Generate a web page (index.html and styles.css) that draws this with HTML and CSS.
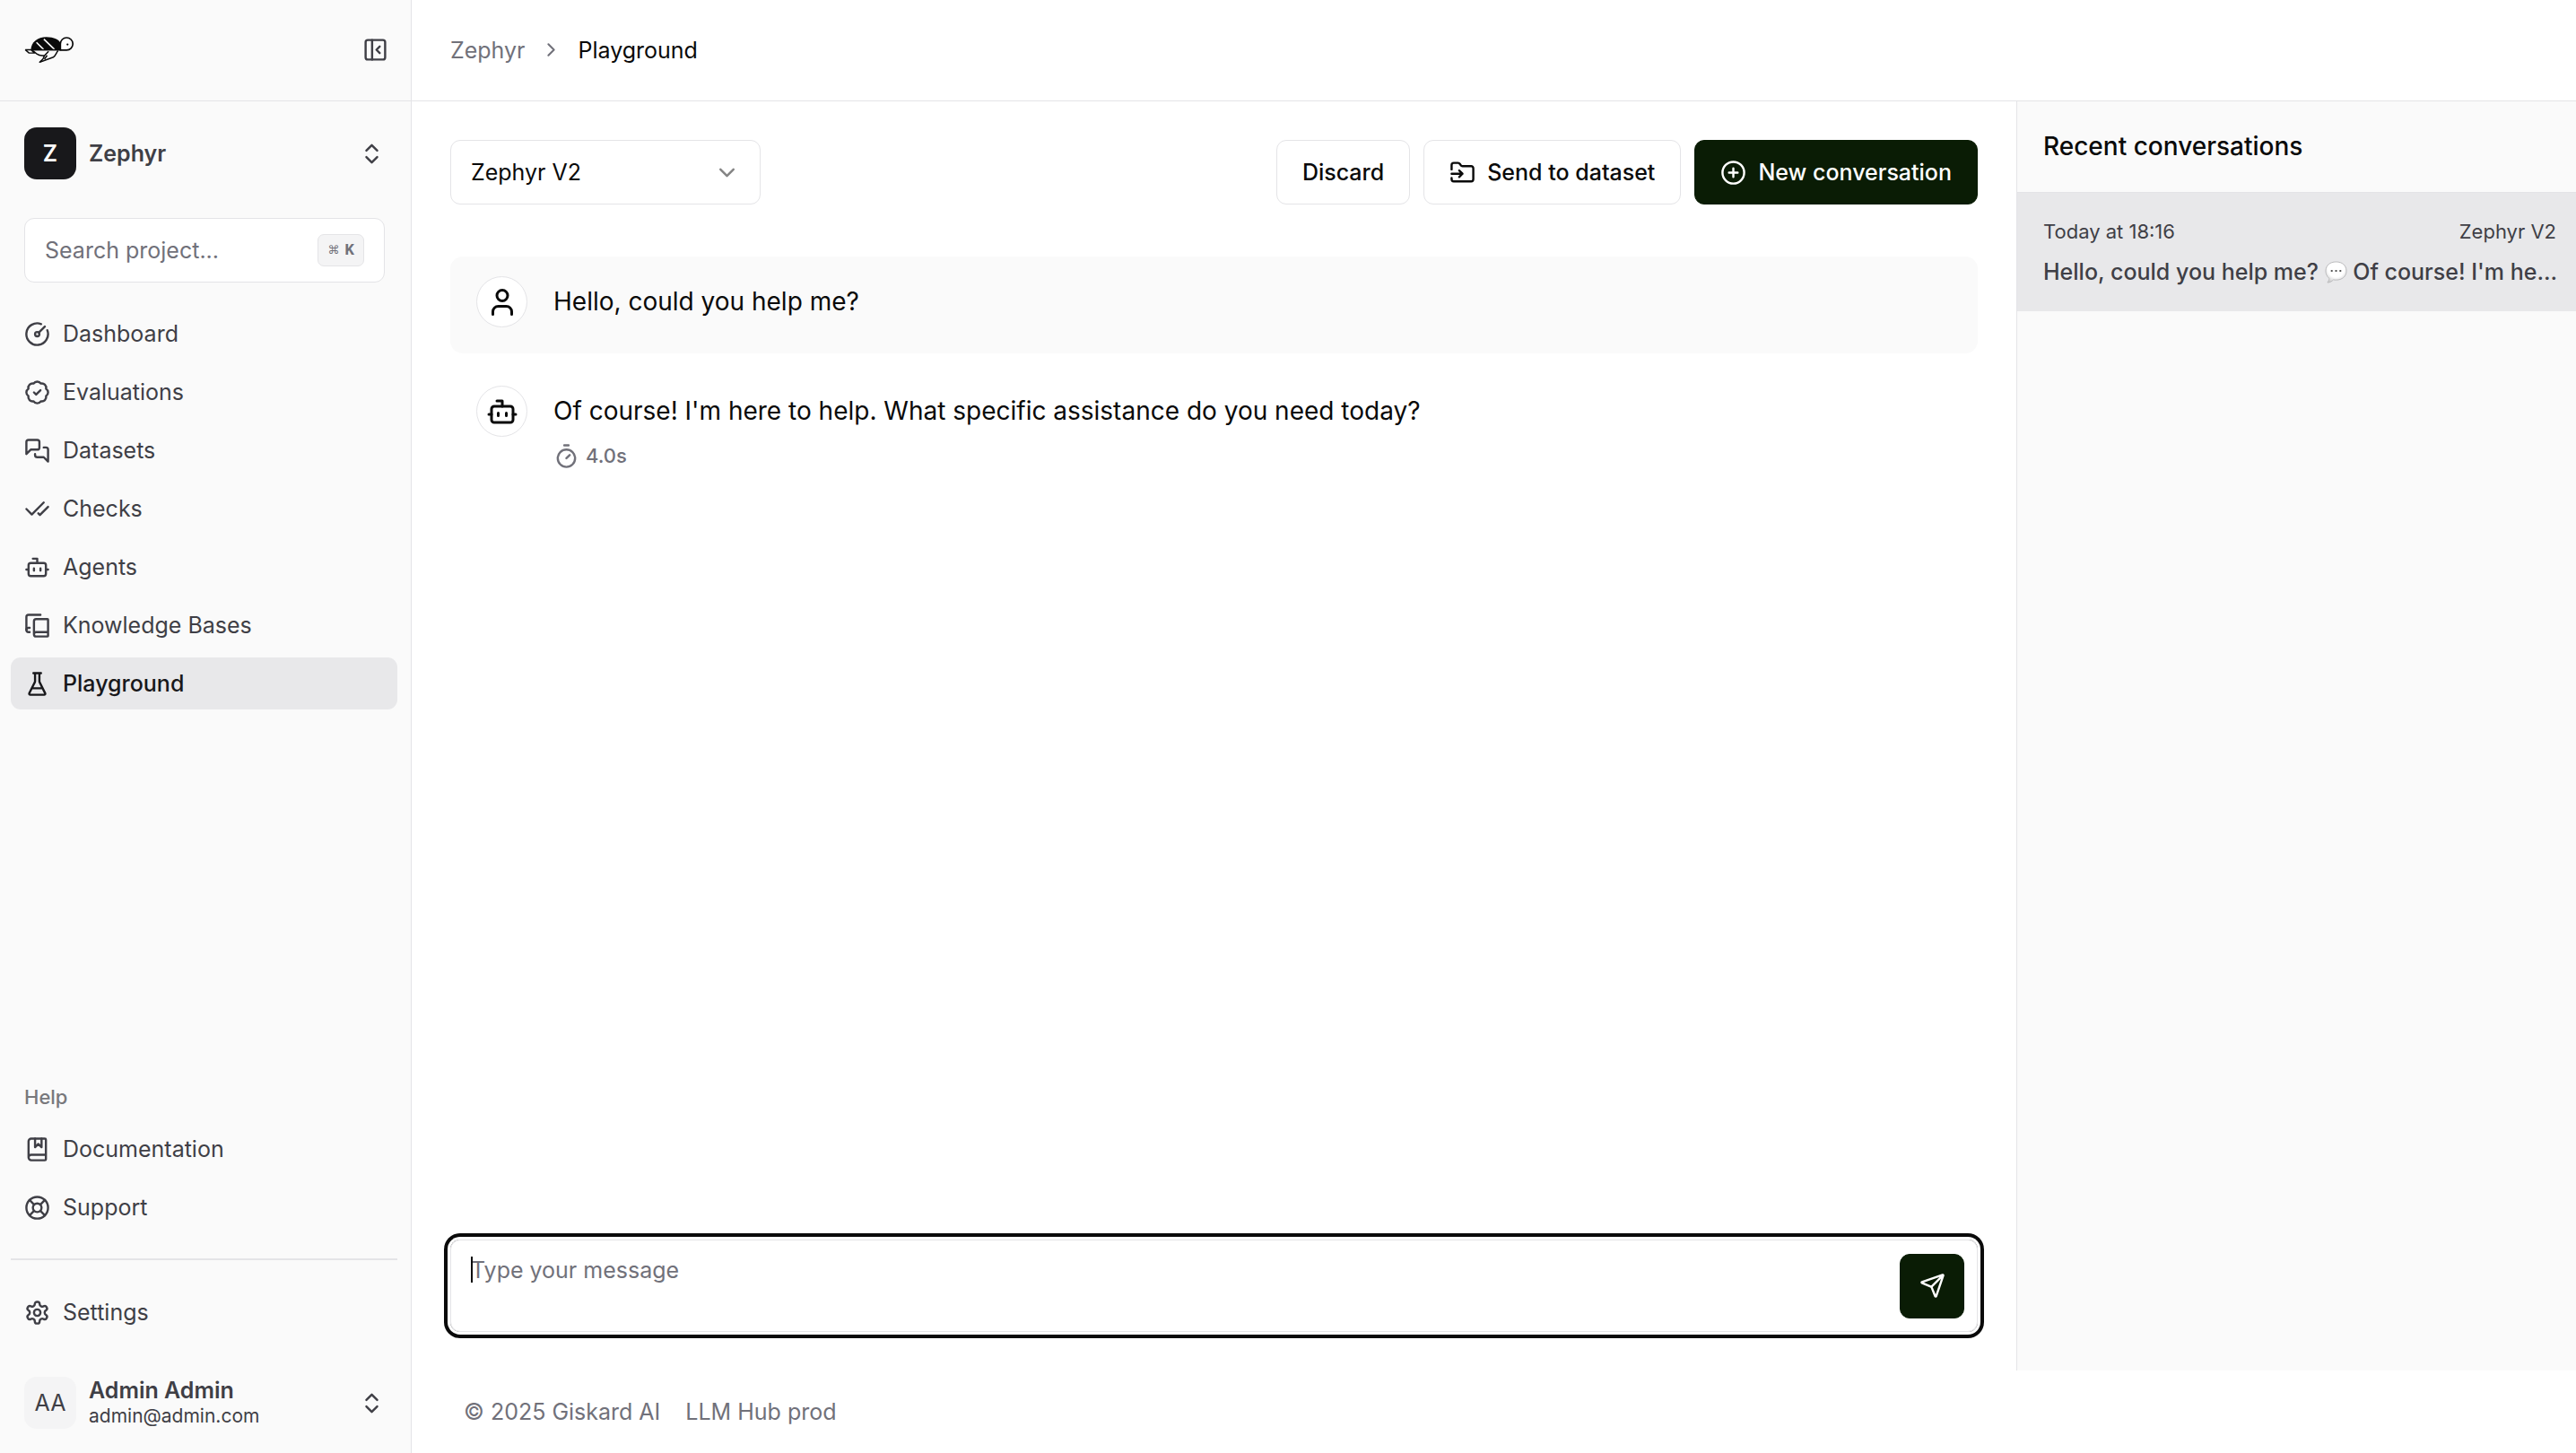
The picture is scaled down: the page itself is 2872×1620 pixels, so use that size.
FILE: index.html
```html
<!DOCTYPE html>
<html lang="en">
<head>
<meta charset="utf-8">
<meta name="viewport" content="width=device-width, initial-scale=1">
<title>Playground - Zephyr</title>
<link rel="stylesheet" href="styles.css">
</head>
<body>
<svg class="sprite" aria-hidden="true">
  <symbol id="panel-close" viewBox="0 0 24 24"><rect x="3" y="3" width="18" height="18" rx="2"/><path d="M9 3v18M16 15l-3-3 3-3"/></symbol>
  <symbol id="chevrons" viewBox="0 0 24 24"><path d="m7 15 5 5 5-5M7 9l5-5 5 5"/></symbol>
  <symbol id="chevron-right" viewBox="0 0 24 24"><path d="m9 18 6-6-6-6"/></symbol>
  <symbol id="chevron-down" viewBox="0 0 24 24"><path d="m6 9 6 6 6-6"/></symbol>
  <symbol id="gauge" viewBox="0 0 24 24"><path d="M15.6 2.7a10 10 0 1 0 5.7 5.7M13.4 10.6 19 5"/><circle cx="12" cy="12" r="2"/></symbol>
  <symbol id="badge-check" viewBox="0 0 24 24"><path d="M3.85 8.62a4 4 0 0 1 4.78-4.77 4 4 0 0 1 6.74 0 4 4 0 0 1 4.78 4.78 4 4 0 0 1 0 6.74 4 4 0 0 1-4.77 4.78 4 4 0 0 1-6.75 0 4 4 0 0 1-4.78-4.77 4 4 0 0 1 0-6.76Z"/><path d="m9 12 2 2 4-4"/></symbol>
  <symbol id="messages" viewBox="0 0 24 24"><path d="M14 9a2 2 0 0 1-2 2H6l-4 4V4a2 2 0 0 1 2-2h8a2 2 0 0 1 2 2z"/><path d="M18 9h2a2 2 0 0 1 2 2v11l-4-4h-6a2 2 0 0 1-2-2v-1"/></symbol>
  <symbol id="check-check" viewBox="0 0 24 24"><path d="M18 6 7 17l-5-5M22 10l-7.500 7.500L13 16"/></symbol>
  <symbol id="bot" viewBox="0 0 24 24"><path d="M12 8V4H8"/><rect x="4" y="8" width="16" height="12" rx="2"/><path d="M2 14h2M20 14h2M15 13v2M9 13v2"/></symbol>
  <symbol id="book-copy" viewBox="0 0 24 24"><path d="M2 16V4a2 2 0 0 1 2-2h11"/><path d="M22 18H11a2 2 0 1 0 0 4h10.5a.5.5 0 0 0 .5-.5v-15a.5.5 0 0 0-.5-.5H11a2 2 0 0 0-2 2v12"/><path d="M5 14H4a2 2 0 1 0 0 4h1"/></symbol>
  <symbol id="flask" viewBox="0 0 24 24"><path d="M10 2v7.527a2 2 0 0 1-.211.896L4.720 20.550a1 1 0 0 0 .9 1.450h12.760a1 1 0 0 0 .9-1.450l-5.069-10.127A2 2 0 0 1 14 9.527V2M8.500 2h7M7 16h10"/></symbol>
  <symbol id="book-marked" viewBox="0 0 24 24"><path d="M10 2v8l3-3 3 3V2"/><path d="M4 19.500v-15A2.500 2.500 0 0 1 6.500 2H19a1 1 0 0 1 1 1v18a1 1 0 0 1-1 1H6.500a1 1 0 0 1 0-5H20"/></symbol>
  <symbol id="life-buoy" viewBox="0 0 24 24"><circle cx="12" cy="12" r="10"/><circle cx="12" cy="12" r="4"/><path d="m4.930 4.930 4.240 4.240M14.830 9.170l4.240-4.240M14.830 14.830l4.240 4.240M9.170 14.830l-4.240 4.240"/></symbol>
  <symbol id="settings" viewBox="0 0 24 24"><path d="M12.220 2h-.44a2 2 0 0 0-2 2v.18a2 2 0 0 1-1 1.730l-.43.25a2 2 0 0 1-2 0l-.15-.08a2 2 0 0 0-2.730.73l-.22.38a2 2 0 0 0 .73 2.730l.15.1a2 2 0 0 1 1 1.720v.51a2 2 0 0 1-1 1.740l-.15.09a2 2 0 0 0-.73 2.730l.22.38a2 2 0 0 0 2.730.73l.15-.08a2 2 0 0 1 2 0l.43.25a2 2 0 0 1 1 1.730V20a2 2 0 0 0 2 2h.44a2 2 0 0 0 2-2v-.18a2 2 0 0 1 1-1.730l.43-.25a2 2 0 0 1 2 0l.15.08a2 2 0 0 0 2.730-.73l.22-.39a2 2 0 0 0-.73-2.730l-.15-.08a2 2 0 0 1-1-1.740v-.5a2 2 0 0 1 1-1.740l.15-.09a2 2 0 0 0 .73-2.730l-.22-.38a2 2 0 0 0-2.730-.73l-.15.08a2 2 0 0 1-2 0l-.43-.25a2 2 0 0 1-1-1.730V4a2 2 0 0 0-2-2z"/><circle cx="12" cy="12" r="3"/></symbol>
  <symbol id="folder-input" viewBox="0 0 24 24"><path d="M2 9V5a2 2 0 0 1 2-2h3.900a2 2 0 0 1 1.690.9l.81 1.200a2 2 0 0 0 1.670.9H20a2 2 0 0 1 2 2v10a2 2 0 0 1-2 2H4a2 2 0 0 1-2-2v-1"/><path d="M2 13h10M9 16l3-3-3-3"/></symbol>
  <symbol id="circle-plus" viewBox="0 0 24 24"><circle cx="12" cy="12" r="10"/><path d="M8 12h8M12 8v8"/></symbol>
  <symbol id="user" viewBox="0 0 24 24"><path d="M19 21v-2a4 4 0 0 0-4-4H9a4 4 0 0 0-4 4v2"/><circle cx="12" cy="7" r="4"/></symbol>
  <symbol id="timer" viewBox="0 0 24 24"><path d="M10 2h4M12 14l3-3"/><circle cx="12" cy="14" r="8"/></symbol>
  <symbol id="send" viewBox="0 0 24 24"><path d="M14.536 21.686a.5.5 0 0 0 .937-.024l6.500-19a.496.496 0 0 0-.635-.635l-19 6.500a.5.5 0 0 0-.024.937l7.930 3.180a2 2 0 0 1 1.112 1.110zM21.854 2.147l-10.940 10.939"/></symbol>
</svg>

<div class="app">
  <aside class="sidebar">
    <div class="sidebar-top">
      <a class="logo" href="#" aria-label="Home">
        <svg viewBox="0 0 166 88" width="55" height="29" aria-hidden="true">
          <path d="M22 46C22 18 46 1 74 1c26 0 44 9 49 22v23z" fill="#0a0a0a"/>
          <path d="M41 19l24 24M66 8l36 35" stroke="#fafafa" stroke-width="5" fill="none"/>
          <path d="M122 45V24a21 21 0 1 1 21 21z" fill="#fff" stroke="#0a0a0a" stroke-width="5"/>
          <circle cx="146" cy="26" r="3.500" fill="#0a0a0a"/>
          <path d="M3 44h122M3 44l13 11h19L24 45M30 48l11 9c8 6 18 8 28 6M82 49L68 64l-5 11-11 11 46-17c8-4 9-14 16-22M68 76l9-13" stroke="#0a0a0a" stroke-width="4.500" fill="none" stroke-linejoin="round"/>
        </svg>
      </a>
      <button class="plain" type="button" aria-label="Collapse sidebar"><svg class="icon"><use href="#panel-close"/></svg></button>
    </div>
    <div class="sidebar-body">
      <button class="switcher" type="button">
        <span class="tile tile-dark">Z</span>
        <span class="switcher-text"><strong>Zephyr</strong></span>
        <svg class="icon"><use href="#chevrons"/></svg>
      </button>
      <label class="search">
        <input type="search" placeholder="Search project..." aria-label="Search project">
        <kbd><span class="cmd">⌘</span><span>K</span></kbd>
      </label>
      <nav class="nav" aria-label="Project">
        <a href="#"><svg class="icon"><use href="#gauge"/></svg>Dashboard</a>
        <a href="#"><svg class="icon"><use href="#badge-check"/></svg>Evaluations</a>
        <a href="#"><svg class="icon"><use href="#messages"/></svg>Datasets</a>
        <a href="#"><svg class="icon"><use href="#check-check"/></svg>Checks</a>
        <a href="#"><svg class="icon"><use href="#bot"/></svg>Agents</a>
        <a href="#"><svg class="icon"><use href="#book-copy"/></svg>Knowledge Bases</a>
        <a class="active" href="#" aria-current="page"><svg class="icon"><use href="#flask"/></svg>Playground</a>
      </nav>
      <div class="help">
        <h2>Help</h2>
        <nav class="nav" aria-label="Help">
          <a href="#"><svg class="icon"><use href="#book-marked"/></svg>Documentation</a>
          <a href="#"><svg class="icon"><use href="#life-buoy"/></svg>Support</a>
        </nav>
      </div>
      <hr>
      <nav class="nav nav-settings" aria-label="Account">
        <a href="#"><svg class="icon"><use href="#settings"/></svg>Settings</a>
      </nav>
      <button class="switcher" type="button">
        <span class="tile">AA</span>
        <span class="switcher-text"><strong>Admin Admin</strong><small>admin@admin.com</small></span>
        <svg class="icon"><use href="#chevrons"/></svg>
      </button>
    </div>
  </aside>

  <div class="page">
    <header class="topbar">
      <a href="#">Zephyr</a>
      <svg class="icon icon-sm"><use href="#chevron-right"/></svg>
      <span aria-current="page">Playground</span>
    </header>
    <div class="workspace">
      <main class="chat">
        <div class="toolbar">
          <div class="select">
            <select aria-label="Agent"><option>Zephyr V2</option></select>
            <svg class="icon"><use href="#chevron-down"/></svg>
          </div>
          <div class="actions">
            <button class="btn" type="button">Discard</button>
            <button class="btn" type="button"><svg class="icon"><use href="#folder-input"/></svg>Send to dataset</button>
            <button class="btn btn-primary" type="button"><svg class="icon"><use href="#circle-plus"/></svg>New conversation</button>
          </div>
        </div>
        <div class="messages">
          <article class="message message-user">
            <span class="avatar"><svg class="icon icon-lg"><use href="#user"/></svg></span>
            <p>Hello, could you help me?</p>
          </article>
          <article class="message">
            <span class="avatar"><svg class="icon icon-lg"><use href="#bot"/></svg></span>
            <div>
              <p>Of course! I'm here to help. What specific assistance do you need today?</p>
              <div class="meta"><svg class="icon"><use href="#timer"/></svg>4.0s</div>
            </div>
          </article>
        </div>
        <form class="composer">
          <span class="caret"></span>
          <textarea rows="2" placeholder="Type your message" aria-label="Message"></textarea>
          <button class="btn btn-primary btn-square" type="button" aria-label="Send"><svg class="icon"><use href="#send"/></svg></button>
        </form>
      </main>
      <aside class="recent">
        <h2>Recent conversations</h2>
        <a class="conversation" href="#">
          <span class="conversation-head"><span>Today at 18:16</span><span>Zephyr V2</span></span>
          <span class="conversation-text">Hello, could you help me? <svg class="bubble" viewBox="0 0 26 26" role="img" aria-label="replied"><defs><radialGradient id="shine" cx=".5" cy=".35" r=".65"><stop offset=".6" stop-color="#fff"/><stop offset="1" stop-color="#cfcfd0"/></radialGradient></defs><path d="M13 1c7 0 12 4 12 10.500S20 22 13 22c-1 0-2 0-3-.3C8 24 5 25 3 25c1-1 2-3 2-5C2.500 18 1 15 1 11.500 1 5 6 1 13 1z" fill="url(#shine)" stroke="#b9b9bb"/><path d="M7 11.500h2M12 11.500h2M17 11.500h2" stroke="#555" stroke-width="2"/></svg> Of course! I'm he...</span>
        </a>
      </aside>
    </div>
    <footer class="footer"><span>© 2025 Giskard AI</span><span>LLM Hub prod</span></footer>
  </div>
</div>
</body>
</html>
```

FILE: styles.css
```css
:root {
  --ink: #0a0a0a;
  --text: #3f3f46;
  --muted: #71717a;
  --line: #e4e4e7;
  --surface: #fafafa;
  --selected: #e8e8ea;
  --primary: #0a1c05;
  --radius: 11px;
}

* { box-sizing: border-box; }

body {
  margin: 0;
  background: #fff;
  color: var(--ink);
  font: 400 25px/36px Inter, "Liberation Sans", sans-serif;
}

button, input, select, textarea { font: inherit; color: inherit; }
a { color: inherit; text-decoration: none; }
h2, p { margin: 0; }

.sprite { display: none; }

.icon {
  flex: none;
  width: 29px;
  height: 29px;
  fill: none;
  stroke: currentColor;
  stroke-width: 2;
  stroke-linecap: round;
  stroke-linejoin: round;
}
.icon-sm { width: 25px; height: 25px; }
.icon-lg { width: 36px; height: 36px; }

.app { display: flex; min-height: 100vh; }

/* Sidebar */
.sidebar {
  display: flex;
  flex-direction: column;
  flex: none;
  width: 459px;
  border-right: 1px solid var(--line);
  background: var(--surface);
  color: var(--text);
}
.sidebar-top {
  display: flex;
  align-items: center;
  justify-content: space-between;
  height: 113px;
  padding: 0 25px 2px 27px;
  border-bottom: 1px solid var(--line);
}
.logo { display: flex; }
.plain { display: flex; padding: 0; border: 0; background: none; }

.sidebar-body {
  display: flex;
  flex: 1;
  flex-direction: column;
  padding: 29px 15px 27px 12px;
}
.switcher {
  display: flex;
  align-items: center;
  gap: 14px;
  padding: 0 14px 0 15px;
  border: 0;
  background: none;
  text-align: left;
}
.switcher-text { display: flex; flex: 1; flex-direction: column; }
.switcher strong { font-weight: 600; line-height: 30px; }
.switcher small { font-size: 21px; line-height: 28px; }
.tile {
  display: grid;
  place-items: center;
  width: 58px;
  height: 58px;
  border-radius: 14px;
  background: #f4f4f5;
}
.tile-dark { background: #18181b; color: #fff; font-weight: 600; }

.search {
  display: flex;
  align-items: center;
  height: 72px;
  margin: 43px 14px 28px 15px;
  padding: 0 22px;
  border: 1px solid var(--line);
  border-radius: var(--radius);
  background: #fff;
}
.search input {
  flex: 1;
  min-width: 0;
  padding: 0;
  border: 0;
  background: none;
  outline: 0;
}
.search input::placeholder { color: var(--muted); opacity: 1; }
.search kbd {
  display: flex;
  align-items: center;
  gap: 6px;
  height: 36px;
  padding: 0 10px;
  border: 1px solid var(--line);
  border-radius: 7px;
  background: #f4f4f5;
  color: var(--muted);
  font: 700 18px/24px "Liberation Mono", monospace;
}
.search .cmd { font: 400 13px/24px "DejaVu Sans", sans-serif; }

.nav { display: flex; flex-direction: column; gap: 7px; }
.nav a {
  display: flex;
  align-items: center;
  gap: 14px;
  height: 58px;
  padding: 0 15px;
  border-radius: var(--radius);
}
.nav .active { background: var(--selected); color: #18181b; font-weight: 500; }

.help { margin-top: auto; }
.help h2 {
  padding: 0 15px;
  color: #78787c;
  font-size: 22px;
  font-weight: 500;
  line-height: 58px;
}
.sidebar hr {
  width: 100%;
  height: 2px;
  margin: 28px 0 29px;
  border: 0;
  background: var(--line);
}
.nav-settings { margin-bottom: 43px; }

/* Page */
.page { display: flex; flex: 1; flex-direction: column; min-width: 0; }
.topbar {
  display: flex;
  align-items: center;
  gap: 17px;
  height: 113px;
  padding: 0 43px 1px;
  border-bottom: 1px solid var(--line);
}
.topbar a, .topbar .icon { color: var(--muted); }
.workspace { display: flex; flex: 1; }
.footer {
  display: flex;
  align-items: center;
  gap: 28px;
  height: 92px;
  padding: 0 58px;
  color: var(--muted);
}

/* Chat */
.chat {
  display: flex;
  flex: 1;
  flex-direction: column;
  gap: 58px;
  min-width: 0;
  padding: 43px;
}
.toolbar { display: flex; justify-content: space-between; }
.select { display: grid; align-items: center; width: 346px; }
.select > * { grid-area: 1 / 1; }
.select select {
  height: 72px;
  padding: 0 22px;
  border: 1px solid var(--line);
  border-radius: var(--radius);
  background: #fff;
  appearance: none;
}
.select .icon {
  justify-self: end;
  margin-right: 23px;
  opacity: .5;
  pointer-events: none;
}
.actions { display: flex; gap: 15px; }
.btn {
  display: flex;
  align-items: center;
  justify-content: center;
  gap: 13px;
  height: 72px;
  padding: 0 28px;
  border: 1px solid var(--line);
  border-radius: var(--radius);
  background: #fff;
  font-weight: 500;
}
.btn-primary { border-color: var(--primary); background: var(--primary); color: #fff; }
.btn-square { flex: none; width: 72px; padding: 0; }

.messages { display: flex; flex: 1; flex-direction: column; gap: 14px; }
.message {
  display: flex;
  align-items: flex-start;
  gap: 29px;
  padding: 22px 29px 29px;
  border-radius: 14px;
  font-size: 28px;
}
.message-user { background: var(--surface); }
.message p { line-height: 57px; }
.avatar {
  display: grid;
  flex: none;
  place-items: center;
  width: 57px;
  height: 57px;
  border: 1px solid var(--line);
  border-radius: 50%;
  background: #fff;
}
.meta {
  display: flex;
  align-items: center;
  gap: 7px;
  color: var(--muted);
  font-size: 22px;
  font-weight: 500;
  line-height: 42px;
}

.composer {
  position: relative;
  display: flex;
  align-items: center;
  height: 103px;
  padding: 0 14px 0 22px;
  border: 1px solid var(--line);
  border-radius: var(--radius);
  box-shadow: 0 0 0 3px #fff, 0 0 0 7px var(--ink);
}
.composer textarea {
  flex: 1;
  height: 72px;
  padding: 0;
  border: 0;
  background: none;
  outline: 0;
  resize: none;
}
.composer textarea::placeholder { color: var(--muted); opacity: 1; }
.caret {
  position: absolute;
  top: 18px;
  left: 22px;
  width: 2px;
  height: 29px;
  background: var(--ink);
}

/* Recent conversations */
.recent {
  flex: none;
  width: 624px;
  border-left: 1px solid var(--line);
  background: var(--surface);
}
.recent h2 {
  padding: 0 29px;
  border-bottom: 1px solid var(--line);
  font-size: 28px;
  font-weight: 500;
  line-height: 101px;
}
.conversation {
  display: flex;
  flex-direction: column;
  gap: 9px;
  padding: 25px 22px 26px 29px;
  background: var(--selected);
  color: var(--text);
}
.conversation-head {
  display: flex;
  justify-content: space-between;
  font-size: 22px;
}
.conversation-text {
  font-weight: 500;
  white-space: nowrap;
}
.bubble { width: 25px; height: 25px; vertical-align: -4px; }
```
